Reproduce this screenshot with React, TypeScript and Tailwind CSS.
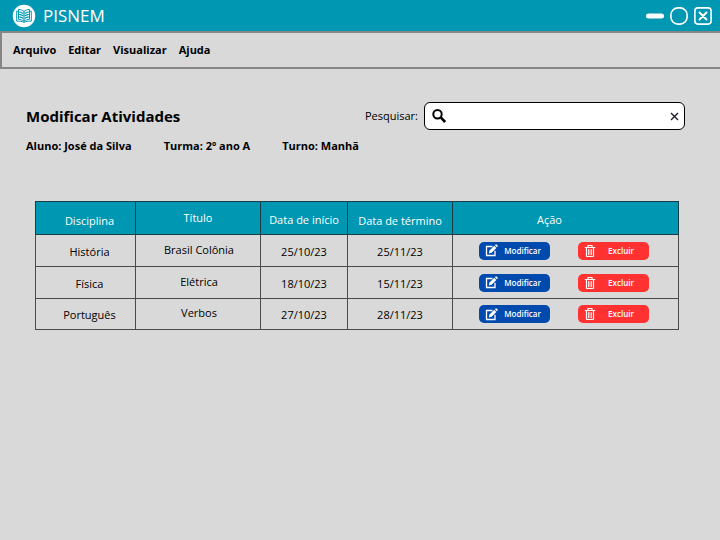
import type { ReactNode } from "react";

const menus = ["Arquivo", "Editar", "Visualizar", "Ajuda"];

const atividades = [
  { disciplina: "História", titulo: "Brasil Colônia", inicio: "25/10/23", termino: "25/11/23" },
  { disciplina: "Física", titulo: "Elétrica", inicio: "18/10/23", termino: "15/11/23" },
  { disciplina: "Português", titulo: "Verbos", inicio: "27/10/23", termino: "28/11/23" },
];

function BookLogo() {
  return (
    <svg viewBox="0 0 24 24" className="size-6 shrink-0" aria-hidden="true">
      <circle cx="12" cy="12" r="11.2" fill="#fff" />
      <g fill="none" stroke="#0097b2" strokeLinejoin="round">
        <path
          d="M12 7.500C10.500 6.300 8.600 5.600 6.500 5.500v9.800c2.100.1 4 .8 5.500 2 1.500-1.200 3.400-1.900 5.500-2V5.500c-2.100.1-4 .8-5.500 2z"
          strokeWidth="1"
        />
        <path d="M6.500 7.200H4.700v10c2.700 0 5-.2 7.300 1.200 2.300-1.400 4.600-1.200 7.300-1.200v-10h-1.800" strokeWidth="1" />
        <path d="M12 7.500v10" strokeWidth="1.200" />
        <path
          d="M7.200 8c1.500.2 2.700.6 3.900 1.400M7.200 10.400c1.500.2 2.700.6 3.900 1.400M7.200 12.800c1.500.2 2.700.6 3.900 1.400M16.800 8c-1.500.2-2.700.6-3.900 1.400M16.800 10.400c-1.500.2-2.700.6-3.900 1.400M16.800 12.800c-1.500.2-2.700.6-3.900 1.400"
          strokeWidth="1.200"
        />
      </g>
    </svg>
  );
}

function EditIcon() {
  return (
    <svg viewBox="0 0 13 13" className="h-[13px] w-[13px] shrink-0" aria-hidden="true">
      <path d="M7.500 2.500H1.500v9h8.500V6.800" fill="none" stroke="#fff" strokeWidth="1.300" />
      <path d="M3.800 9.500l.7-2.900 4.800-4.800 2.100 2.100-4.800 4.800z" fill="#fff" />
      <path d="M9.900 1.200l.7-.7q.5-.5 1 0l1 1q.5.500 0 1l-.7.700z" fill="#fff" />
    </svg>
  );
}

function TrashIcon() {
  return (
    <svg viewBox="0 0 12 14" className="h-[14px] w-3 shrink-0" fill="none" stroke="#fff" aria-hidden="true">
      <path d="M.8 3.500h10.400M4 3V1.500h4V3" strokeWidth="1.200" />
      <path d="M2.500 4v8q0 .5.500.5h6q.5 0 .5-.5V4" strokeWidth="1.200" />
      <path d="M4.500 5.200v6M6 5.200v6M7.500 5.200v6" strokeWidth=".8" />
    </svg>
  );
}

function ActionButton({ color, icon, children }: { color: string; icon: ReactNode; children: ReactNode }) {
  return (
    <button
      type="button"
      className={`flex h-[18px] w-[71px] items-center rounded-[5px] pr-[2px] pl-[6px] text-[8px] leading-none font-semibold text-white ${color}`}
    >
      {icon}
      <span className="flex-1 text-center">{children}</span>
    </button>
  );
}

export default function App() {
  return (
    <div className="min-h-screen bg-[#d9d9d9] font-['Open_Sans','Noto_Sans',sans-serif] text-black">
      <header className="flex h-[31px] items-center bg-[#0097b2] pr-2 pl-3 text-white">
        <BookLogo />
        <span className="ml-[7px] text-[17px] leading-6">PISNEM</span>
        <div className="ml-auto flex items-center gap-[6px]">
          <button type="button" aria-label="Minimizar">
            <svg viewBox="0 0 18 18" className="size-[18px]">
              <rect x="0" y="6.500" width="18" height="5" rx="2.500" fill="#fff" />
            </svg>
          </button>
          <button type="button" aria-label="Maximizar">
            <svg viewBox="0 0 18 18" className="size-[18px]">
              <rect x=".9" y=".9" width="16.200" height="16.200" rx="7" fill="none" stroke="#fff" strokeWidth="1.600" />
            </svg>
          </button>
          <button type="button" aria-label="Fechar">
            <svg viewBox="0 0 18 18" className="size-[18px]" fill="none" stroke="#fff">
              <rect x=".9" y=".9" width="16.200" height="16.200" rx="3" strokeWidth="1.600" />
              <path d="M5.500 5.500l7 7M12.500 5.500l-7 7" strokeWidth="2" strokeLinecap="round" />
            </svg>
          </button>
        </div>
      </header>

      <nav className="flex h-[38px] items-center gap-3 border-y-2 border-l-2 border-[#868686] pl-[11px] text-[11px] leading-4 font-bold">
        {menus.map((menu) => (
          <button key={menu} type="button">
            {menu}
          </button>
        ))}
      </nav>

      <main className="pt-[33px] pr-[35px] pl-[26px]">
        <div className="flex items-center">
          <h1 className="text-[15px] leading-6 font-bold">Modificar Atividades</h1>
          <label htmlFor="pesquisa" className="ml-auto text-[11px] leading-4">
            Pesquisar:
          </label>
          <div className="ml-[6px] flex h-7 w-[261px] items-center rounded-md border border-black bg-white pr-[5px] pl-[6px]">
            <svg viewBox="0 0 16 16" className="size-4 shrink-0" fill="none" stroke="#000" aria-hidden="true">
              <circle cx="6.500" cy="6.200" r="4.200" strokeWidth="2" />
              <path d="M9.500 9.200l4.700 4.800" strokeWidth="2.600" />
            </svg>
            <input id="pesquisa" type="text" className="min-w-0 flex-1 px-2 text-[11px] outline-none" />
            <button type="button" aria-label="Limpar">
              <svg viewBox="0 0 9 9" className="size-[9px]" fill="none" stroke="#1e1e2e" strokeWidth="1.400">
                <path d="M1 1l7 7M8 1l-7 7" />
              </svg>
            </button>
          </div>
        </div>

        <div className="mt-2 flex gap-8 text-[11px] leading-4 font-bold">
          <span>Aluno: José da Silva</span>
          <span>Turma: 2º ano A</span>
          <span>Turno: Manhã</span>
        </div>

        <div className="mt-[47px] pr-[6px] pl-[9px]">
          <table className="w-full table-fixed border-collapse text-center text-[11px] leading-4 [&_td]:border [&_td]:border-[#4a4a4a] [&_th]:border [&_th]:border-[#1c3f47]">
            <colgroup>
              <col className="w-[100px]" />
              <col className="w-[125px]" />
              <col className="w-[87px]" />
              <col className="w-[105px]" />
              <col />
            </colgroup>
            <thead className="bg-[#0097b2] text-white">
              <tr className="h-[33px] [&>th]:font-normal">
                <th className="pt-[6px] pl-2">Disciplina</th>
                <th>Título</th>
                <th className="pt-1 whitespace-nowrap">Data de início</th>
                <th className="pt-[6px] whitespace-nowrap">Data de término</th>
                <th className="pt-1 pr-8">Ação</th>
              </tr>
            </thead>
            <tbody>
              {atividades.map((a) => (
                <tr key={a.disciplina} className="h-8 last:h-[31px]">
                  <td className="pt-[2px] pl-2">{a.disciplina}</td>
                  <td className="pb-[2px] pl-[2px]">{a.titulo}</td>
                  <td className="pt-[2px]">{a.inicio}</td>
                  <td className="pt-[2px]">{a.termino}</td>
                  <td className="pr-1">
                    <div className="flex justify-center gap-7">
                      <ActionButton color="bg-[#004aad]" icon={<EditIcon />}>
                        Modificar
                      </ActionButton>
                      <ActionButton color="bg-[#ff3131]" icon={<TrashIcon />}>
                        Excluir
                      </ActionButton>
                    </div>
                  </td>
                </tr>
              ))}
            </tbody>
          </table>
        </div>
      </main>
    </div>
  );
}
